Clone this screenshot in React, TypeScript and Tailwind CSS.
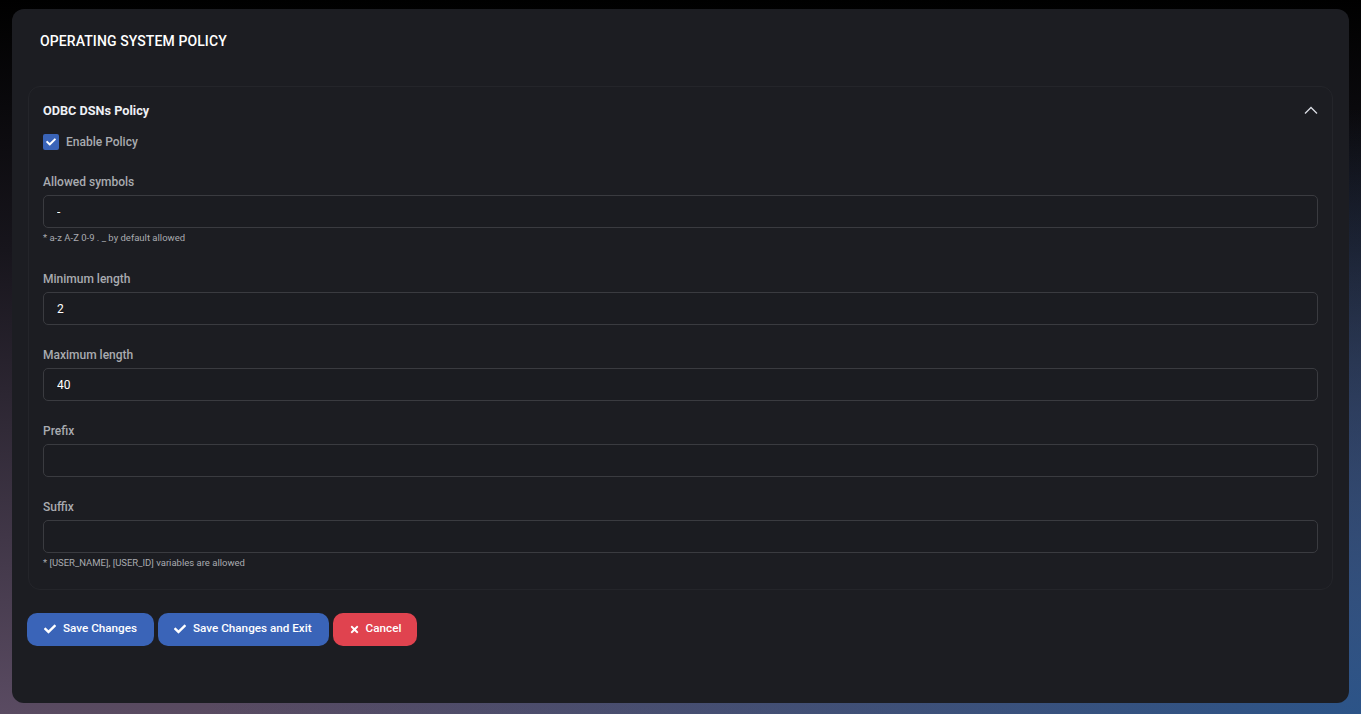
import { FaCheck, FaTimes } from "react-icons/fa";

const Field = ({ label, value, hint }: { label: string; value?: string; hint?: string }) => {
  return (
    <div className="flex flex-col">
      <label className="text-[12px] font-medium text-[#a9abb0] mb-[4px]">{label}</label>
      <input
        readOnly
        value={value ?? ""}
        className="h-[33px] w-full rounded-[5px] border border-[#3a3b40] bg-[#1b1c21] px-[13px] text-[12px] text-white outline-none"
      />
      {hint && <p className="mt-[3px] text-[9.5px] text-[#a9abb0]">{hint}</p>}
    </div>
  );
};

export default function App() {
  return (
    <div
      className="h-[714px] w-[1361px] overflow-hidden pt-[9px] pl-[12px] font-['Roboto',sans-serif] bg-[radial-gradient(ellipse_at_100%_100%,#2c5488_0%,transparent_60%),linear-gradient(180deg,#000000_0%,#17151c_35%,#5a4b62_100%)]"
    >
      <div className="flex h-[694px] w-[1337px] flex-col rounded-[12px] bg-[#1c1d22] px-[16px]">
        <h1 className="mt-[22px] ml-[12px] text-[14px] font-medium tracking-[0.1px] text-white">OPERATING SYSTEM POLICY</h1>

        <section className="mt-[34px] rounded-[12px] border border-[#24252a] bg-[#1c1d22] px-[14px] pb-[18px]">
          <div className="flex h-[46px] items-center justify-between pt-[1px]">
            <h2 className="text-[12.7px] font-bold text-[#eef0f5]">ODBC DSNs Policy</h2>
            <svg width="14" height="8" viewBox="0 0 14 8" fill="none" className="-mt-[2px]">
              <polyline points="1,7.5 7,1.5 13,7.5" stroke="#d9dce3" strokeWidth="1.3" />
            </svg>
          </div>

          <label className="flex items-center gap-[7px]">
            <span className="flex h-[16px] w-[16px] items-center justify-center rounded-[2px] bg-[#3a64b8]">
              <FaCheck className="text-white" size={10} />
            </span>
            <span className="text-[12px] font-medium text-[#a9abb0]">Enable Policy</span>
          </label>

          <div className="mt-[22px] flex flex-col gap-[21px]">
            <div className="-mb-[4px]">
              <Field label="Allowed symbols" value="-" hint="* a-z A-Z 0-9 . _ by default allowed" />
            </div>
            <div className="mt-[8px]">
              <Field label="Minimum length" value="2" />
            </div>
            <Field label="Maximum length" value="40" />
            <Field label="Prefix" />
            <Field label="Suffix" hint="* [USER_NAME], [USER_ID] variables are allowed" />
          </div>
        </section>

        <div className="mt-[23px] flex gap-[4px] -ml-[1px]">
          <button className="flex h-[33px] items-center gap-[7px] rounded-[10px] bg-[#3a64b8] pl-[17px] pr-[17px] text-[11.7px] font-medium text-white">
            <FaCheck size={12} />
            Save Changes
          </button>
          <button className="flex h-[33px] items-center gap-[7px] rounded-[10px] bg-[#3a64b8] pl-[16px] pr-[17px] text-[11.7px] font-medium text-white">
            <FaCheck size={12} />
            Save Changes and Exit
          </button>
          <button className="flex h-[33px] items-center gap-[6px] rounded-[10px] bg-[#e0434f] pl-[16px] pr-[16px] text-[11.7px] font-medium text-white">
            <FaTimes size={11} />
            Cancel
          </button>
        </div>
      </div>
    </div>
  );
}
